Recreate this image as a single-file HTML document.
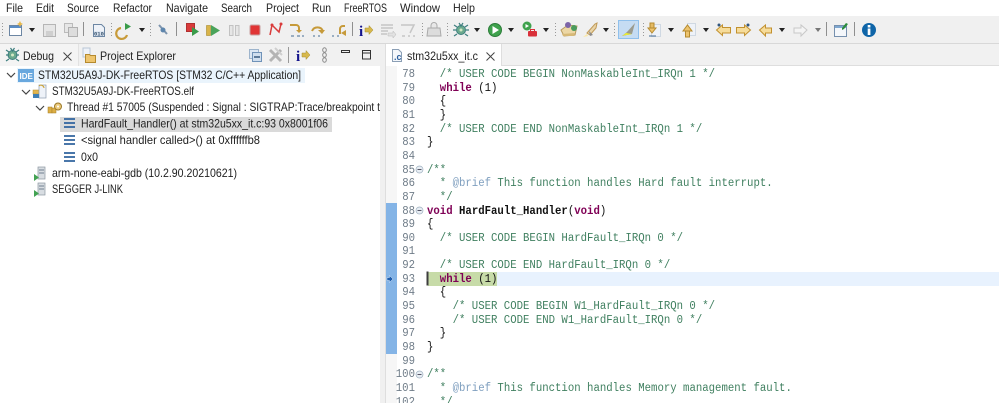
<!DOCTYPE html>
<html><head><meta charset="utf-8"><style>
html,body{margin:0;padding:0;background:#fff}
#p{position:relative;width:999px;height:403px;overflow:hidden;background:#fff;font-family:"Liberation Sans",sans-serif;font-size:12px;color:#222}
.a{position:absolute}
.c{position:absolute;left:427px;margin-top:1px;white-space:pre;font:11.5px/14px "Liberation Mono",monospace;color:#111;transform:scaleX(.9275);transform-origin:0 0}
.n{position:absolute;left:386px;width:29px;margin-top:1px;text-align:right;font:11.5px/14px "Liberation Mono",monospace;color:#6f7c88;transform:scaleX(.9275);transform-origin:100% 0}
.g{color:#3f7f5f}.k{color:#7f0055;font-weight:bold}.b{font-weight:bold}.v{color:#7f9fbf}
.ar{position:absolute;width:0;height:0;border-left:3px solid transparent;border-right:3px solid transparent;border-top:4px solid #222}
svg{position:absolute;overflow:visible}
svg text.u{font-family:"Liberation Sans",sans-serif;font-size:12px;fill:#222}
</style></head><body><div id="p">
<div class="a" style="left:0;top:16px;width:999px;height:27px;background:#f0f0f0"></div>
<div class="a" style="left:0;top:43px;width:999px;height:1px;background:#d8d8d8"></div>
<div class="a" style="left:0;top:44px;width:999px;height:22px;background:#f1f1f1"></div>
<div class="a" style="left:0;top:44px;width:78px;height:22px;background:#f4f4f4"></div>
<div class="a" style="left:78px;top:44px;width:1px;height:22px;background:#e2e2e2"></div>
<div class="a" style="left:380px;top:44px;width:5px;height:359px;background:#f0f0f0"></div>
<div class="a" style="left:385px;top:44px;width:1px;height:359px;background:#dedede"></div>
<div class="a" style="left:386px;top:44px;width:116px;height:22px;background:#fff"></div>
<div class="a" style="left:501px;top:44px;width:1px;height:22px;background:#dedede"></div>
<div class="a" style="left:502px;top:65px;width:497px;height:1px;background:#dedede"></div>

<!-- debug tree highlights -->
<div class="a" style="left:17px;top:68px;width:288px;height:15px;background:#eaf4fc"></div>
<div class="a" style="left:60px;top:117px;width:272px;height:15px;background:#dadada"></div>

<!-- UI text -->
<svg width="999" height="403" style="left:0;top:0">
<g>
<text class="u" x="6" y="12" textLength="17" lengthAdjust="spacingAndGlyphs">File</text>
<text class="u" x="36" y="12" textLength="18" lengthAdjust="spacingAndGlyphs">Edit</text>
<text class="u" x="67" y="12" textLength="32" lengthAdjust="spacingAndGlyphs">Source</text>
<text class="u" x="113" y="12" textLength="39" lengthAdjust="spacingAndGlyphs">Refactor</text>
<text class="u" x="166" y="12" textLength="42" lengthAdjust="spacingAndGlyphs">Navigate</text>
<text class="u" x="221" y="12" textLength="31" lengthAdjust="spacingAndGlyphs">Search</text>
<text class="u" x="266" y="12" textLength="33" lengthAdjust="spacingAndGlyphs">Project</text>
<text class="u" x="312" y="12" textLength="19" lengthAdjust="spacingAndGlyphs">Run</text>
<text class="u" x="344" y="12" textLength="43" lengthAdjust="spacingAndGlyphs">FreeRTOS</text>
<text class="u" x="400" y="12" textLength="40" lengthAdjust="spacingAndGlyphs">Window</text>
<text class="u" x="453" y="12" textLength="22" lengthAdjust="spacingAndGlyphs">Help</text>
<text class="u" x="23" y="60" textLength="31" lengthAdjust="spacingAndGlyphs">Debug</text>
<text class="u" x="100" y="60" textLength="76" lengthAdjust="spacingAndGlyphs">Project Explorer</text>
<text class="u" x="407" y="60" textLength="71" lengthAdjust="spacingAndGlyphs">stm32u5xx_it.c</text>
<text class="u" x="38" y="79" textLength="263" lengthAdjust="spacingAndGlyphs">STM32U5A9J-DK-FreeRTOS [STM32 C/C++ Application]</text>
<text class="u" x="52" y="95" textLength="142" lengthAdjust="spacingAndGlyphs">STM32U5A9J-DK-FreeRTOS.elf</text>
<text class="u" x="67" y="111" textLength="313" lengthAdjust="spacingAndGlyphs">Thread #1 57005 (Suspended : Signal : SIGTRAP:Trace/breakpoint t</text>
<text class="u" x="81" y="127.500" textLength="247" lengthAdjust="spacingAndGlyphs">HardFault_Handler() at stm32u5xx_it.c:93 0x8001f06</text>
<text class="u" x="81" y="144" textLength="179" lengthAdjust="spacingAndGlyphs">&lt;signal handler called&gt;() at 0xffffffb8</text>
<text class="u" x="81" y="161" textLength="17" lengthAdjust="spacingAndGlyphs">0x0</text>
<text class="u" x="52" y="177" textLength="185" lengthAdjust="spacingAndGlyphs">arm-none-eabi-gdb (10.2.90.20210621)</text>
<text class="u" x="52" y="193" textLength="71" lengthAdjust="spacingAndGlyphs">SEGGER J-LINK</text>
</g>
</svg>

<!-- toolbar icons -->
<svg width="999" height="44" style="left:0;top:0">
<g fill="none">
<path d="M2.500 23v13M111.500 23v13M150.500 23v13M422.500 23v13M447.500 23v13M555.500 23v13M614.500 23v13M643.500 23v13" stroke="#999" stroke-dasharray="1 2"/>
<path d="M83.500 22v14M176.500 22v14M352.500 22v14M826.500 22v14M854.500 22v14" stroke="#8f8f8f"/>
<!-- new -->
<rect x="9.500" y="25.500" width="12" height="10" fill="#fff" stroke="#6c86a3"/><rect x="10" y="26" width="11" height="2" fill="#5a8cc4"/>
<path d="M20 21l1 2 2 1-2 1-1 2-1-2-2-1 2-1z" fill="#e8b84a"/>
<!-- save -->
<rect x="43.500" y="24.500" width="12" height="12" fill="#e6e6e6" stroke="#b5b5b5"/><rect x="46" y="31" width="7" height="5" fill="#cfcfcf"/>
<rect x="64.500" y="23.500" width="8" height="9" fill="#e6e6e6" stroke="#bbb"/><rect x="68.500" y="27.500" width="9" height="9" fill="#ddd" stroke="#b0b0b0"/>
<!-- 010 -->
<path d="M93.500 24.500h8l3 3v9h-11z" fill="#eef2f8" stroke="#6c86a3"/><rect x="94" y="31" width="10" height="5" fill="#dfe7f2"/>
<text x="94" y="35.500" font-family="Liberation Mono" font-size="5.500" font-weight="bold" fill="#36536e">010</text>
<!-- debug config -->
<path d="M121 28a5.500 5.500 0 1 0 6 7" stroke="#c89b3a" stroke-width="2.200"/><path d="M125 23l6 3.500-6 3.500z" fill="#3a9b4a"/>
<!-- skip -->
<path d="M159 25l8 9" stroke="#7d94ad" stroke-width="2"/><circle cx="163" cy="30" r="2.500" fill="#5e86ad"/>
<!-- resume etc -->
<rect x="186.500" y="23.500" width="8" height="8" fill="#d93b3b" stroke="#b03030"/><path d="M192 27l7 4.500-7 4.500z" fill="#3a9b4a"/>
<rect x="206.500" y="25.500" width="4" height="10" fill="#d9b44a" stroke="#a98a2c" stroke-width=".6"/><path d="M211 25l9 5.500-9 5.500z" fill="#4aa35a"/>
<rect x="229.500" y="25.500" width="3.500" height="10" fill="#e6e6e6" stroke="#c2c2c2"/><rect x="235.500" y="25.500" width="3.500" height="10" fill="#e6e6e6" stroke="#c2c2c2"/>
<rect x="250" y="25" width="10" height="10" rx="1.500" fill="#e03434" stroke="#c9a0a0"/>
<path d="M270 35l2-10 7 7 2-8" stroke="#d93b3b" stroke-width="1.500"/><circle cx="272" cy="25" r="1.500" fill="#d93b3b"/><circle cx="281" cy="24" r="1.500" fill="#d93b3b"/>
<path d="M290 25h6a3 3 0 0 1 3 3v3" stroke="#c69a3a" stroke-width="2"/><path d="M296 30h6l-3 3z" fill="#c69a3a"/><path d="M291 36h3M297 36h3M302 36h2" stroke="#456b94"/>
<path d="M312 31a6 6 0 0 1 11 0" stroke="#c69a3a" stroke-width="2"/><path d="M318 30h7l-3 4z" fill="#c69a3a"/><path d="M313 36h2M318 36h2" stroke="#456b94"/>
<path d="M332 36h2M337 36h2" stroke="#456b94"/><path d="M340 34v-5a3 3 0 0 1 3-3h2" stroke="#c69a3a" stroke-width="2"/><path d="M341 33l5-3v6z" fill="#c69a3a"/>
<!-- i arrow -->
<text x="359" y="36" font-family="Liberation Serif" font-size="15" font-weight="bold" fill="#14148c">i</text><path d="M365 28h4v-2.500l4 4.500-4 4.500v-2.500h-4z" fill="#d7b84b" stroke="#a68c2e" stroke-width=".5"/>
<!-- disabled -->
<path d="M381 25h12M381 28h12M381 31h7M381 34h6" stroke="#bdbdbd" stroke-width="1.300"/><path d="M388 33h5v-2l3 3.500-3 3.500v-2h-5z" fill="#e2e2e2" stroke="#b8b8b8" stroke-width=".5"/>
<path d="M401 25h13l-4 8M402 36h3M408 36h2M413 36h2" stroke="#c6c6c6" stroke-width="1.500"/>
<rect x="431" y="22.500" width="6" height="9" rx="3" fill="#e8e8e8" stroke="#aaa"/><path d="M428 28h12l1 8h-14z" fill="#dcdcdc" stroke="#aaa"/>
<!-- bug -->
<circle cx="461" cy="30" r="4.500" fill="#6aa98d" stroke="#3e7f7f"/><circle cx="461" cy="30" r="1.500" fill="#d4e8c4"/><path d="M454 25l3 2M468 25l-3 2M453 30h3M469 30h-3M454 36l3-2M468 36l-3-2M459 23l2 3 2-3" stroke="#3e7f7f" stroke-width="1.200"/>
<!-- run -->
<circle cx="495" cy="30" r="6.500" fill="#3fa24d" stroke="#2d7d3a"/><path d="M492.500 26l6.500 4-6.500 4z" fill="#fff"/>
<circle cx="527" cy="26" r="4.500" fill="#3fa24d"/><path d="M525.500 24l3.500 2-3.500 2z" fill="#fff"/><rect x="528" y="31" width="9" height="5.500" rx="1" fill="#d9303a"/><rect x="530.500" y="29.500" width="4" height="2" stroke="#d9303a"/>
<!-- folder -->
<path d="M561 30l7-5 9 1-2 9-11 1z" fill="#ecd7a5" stroke="#b89a5d"/><path d="M562 34l13-1-1 3h-11z" fill="#d7b977"/><circle cx="568" cy="25" r="3" fill="#7d65a8"/><circle cx="574" cy="28" r="3" fill="#4a9b5d"/>
<!-- rocket -->
<path d="M587 33l8-9 2-1-1 5-6 7z" fill="#e9d4a8" stroke="#c09a58"/><path d="M589 31l4 4-3 1z" fill="#8c8c8c"/><path d="M583 37l4-3 1 2z" fill="#fbe8a4"/>
</g>
<rect x="618.500" y="20.500" width="20" height="18" fill="#c5dcf3" stroke="#8fc0ec"/>
<path d="M622 36l5-4 8-9-3 11z" fill="#9b9b8f"/><path d="M622 36c3-1 7-1 10-2l-6-1z" fill="#ecec2e"/>
<g fill="none">
<!-- annotations -->
<rect x="651.500" y="24.500" width="9" height="12" fill="#eef2f8" stroke="#cfd8e2"/>
<rect x="650" y="23" width="4" height="6" fill="#e4ba64" stroke="#b58a2e"/><path d="M648 28h8l-4 5z" fill="#edc36d" stroke="#b58a2e"/><path d="M649 36h7" stroke="#456b94"/>
<rect x="687.500" y="23.500" width="8" height="12" fill="#eef2f8" stroke="#cfd8e2"/>
<path d="M683 31h9l-4.500-6zM685.500 31h4v6h-4z" fill="#edc36d" stroke="#b58a2e"/>
<!-- nav -->
<path d="M716.500 30l6-5v2.500h8v5.500h-8v2.500z" fill="#f6dc9a" stroke="#c2912f"/><circle cx="719" cy="25" r="1.500" fill="#33577f"/>
<path d="M750.500 30l-6-5v2.500h-8v5.500h8v2.500z" fill="#f6dc9a" stroke="#c2912f"/><circle cx="748" cy="25" r="1.500" fill="#33577f"/>
<path d="M759.500 30l6-5v3h6v5h-6v3z" fill="#f6dc9a" stroke="#c2912f"/>
<path d="M807 30l-6-5v3h-7v5h7v3z" fill="#f4f4f4" stroke="#c8c8c8"/>
<!-- note -->
<rect x="834.500" y="25.500" width="12" height="11" fill="#f4f7fb" stroke="#7690ae"/><rect x="835" y="26" width="11" height="2" fill="#7fa7d0"/><path d="M842 28l4-5 2 1-4 5-2 1z" fill="#2d8d3c"/>
<!-- info -->
<circle cx="869" cy="30" r="7" fill="#0f65a8"/><rect x="867.700" y="25" width="2.700" height="2.500" fill="#fff"/><rect x="867.700" y="28.500" width="2.700" height="6.500" fill="#fff"/>
</g>
</svg>
<div class="ar" style="left:29px;top:28px"></div>
<div class="ar" style="left:139px;top:28px"></div>
<div class="ar" style="left:474px;top:28px"></div>
<div class="ar" style="left:508px;top:28px"></div>
<div class="ar" style="left:543px;top:28px"></div>
<div class="ar" style="left:603px;top:28px"></div>
<div class="ar" style="left:668px;top:28px"></div>
<div class="ar" style="left:703px;top:28px"></div>
<div class="ar" style="left:779px;top:28px"></div>
<div class="ar" style="left:815px;top:28px;border-top-color:#777"></div>

<!-- tab row -->
<svg width="999" height="66" style="left:0;top:0"><g fill="none">
<circle cx="12.500" cy="55" r="4.500" fill="#6aa98d" stroke="#3e7f7f"/><circle cx="12.500" cy="55" r="1.500" fill="#d4e8c4"/><path d="M6 50l3 2M19 50l-3 2M6 55h3M19 55h-3M6 61l3-2M19 61l-3-2M10.500 48l2 3 2-3" stroke="#3e7f7f" stroke-width="1.200"/>
<path d="M63.500 52.500l8 8M71.500 52.500l-8 8" stroke="#444" stroke-width="1"/>
<rect x="83" y="48" width="7" height="9" fill="#eef2f8" stroke="#b9c6d6"/><path d="M85.500 54.500h4l1 1h5v7h-10z" fill="#eec56e" stroke="#b58a2e"/>
<rect x="249.500" y="49.500" width="9" height="9" fill="#dce7f3" stroke="#9db4cc"/><rect x="252.500" y="52.500" width="9" height="9" fill="#cfdeee" stroke="#6f92b8"/><path d="M254 57h6" stroke="#35587f" stroke-width="1.500"/>
<path d="M270 50l11 11M281 50l-11 11" stroke="#b4b4b4" stroke-width="3"/><path d="M275 48l7 7" stroke="#cfcfcf" stroke-width="2"/>
<path d="M288.500 47v16" stroke="#999"/>
<text x="296" y="61" font-family="Liberation Serif" font-size="15" font-weight="bold" fill="#14148c">i</text><path d="M302 53h4v-2.500l4 4.500-4 4.500v-2.500h-4z" fill="#d7b84b" stroke="#a68c2e" stroke-width=".5"/>
<ellipse cx="324.500" cy="50" rx="1.800" ry="2.300" stroke="#8a8a8a"/><ellipse cx="324.500" cy="55" rx="1.800" ry="2.300" stroke="#8a8a8a"/><ellipse cx="324.500" cy="60" rx="1.800" ry="2.300" stroke="#8a8a8a"/>
<rect x="341.500" y="50.500" width="8" height="2" stroke="#333"/>
<rect x="362.500" y="50.500" width="8" height="8.500" stroke="#333"/><path d="M363 53h7" stroke="#333"/>
<path d="M392.500 49.500h6l3 3v9h-9z" fill="#f4f7fb" stroke="#8b9fb5"/>
<text x="394" y="60" font-family="Liberation Sans" font-size="9" font-weight="bold" fill="#2b5f9e">.c</text>
<path d="M486.500 52.500l8 8M494.500 52.500l-8 8" stroke="#444"/>
</g></svg>

<!-- tree icons -->
<svg width="390" height="403" style="left:0;top:0"><g fill="none">
<path d="M7 73l4 4 4-4M22 90l4 4 4-4M36 106l4 4 4-4" stroke="#444" stroke-width="1.200"/>
<rect x="18" y="69" width="16" height="13" fill="#69a8de"/>
<text x="19.500" y="79" font-family="Liberation Sans" font-size="8" font-weight="bold" fill="#fff">IDE</text>
<rect x="33" y="90" width="6" height="4" fill="#e2b64e" stroke="#b58a2e" stroke-width=".5"/><rect x="39" y="85" width="7" height="13" fill="#eef2f8" stroke="#8e9db0" stroke-width=".7"/><rect x="33" y="94" width="6" height="4" fill="#3f7fb5"/>
<path d="M39 86c2-2 5 0 5 2" stroke="#caa02e"/>
<rect x="48" y="107" width="4" height="6" fill="#dcae45" stroke="#a57e27" stroke-width=".5"/><rect x="52" y="108" width="4" height="5" fill="#dcae45" stroke="#a57e27" stroke-width=".5"/><circle cx="58" cy="106.500" r="3.500" fill="#eccb7d" stroke="#9c7a2a"/><circle cx="58" cy="106.500" r="1" fill="#fff"/>
<path d="M64 119h11M64 123h11M64 127h11M64 136h11M64 140h11M64 144h11M64 153h11M64 157h11M64 161h11" stroke="#30649e" stroke-width="1.800"/>
<rect x="38" y="167" width="7" height="12" fill="#d8dde2" stroke="#8c96a0" stroke-width=".7"/><path d="M39 170h5M39 173h5" stroke="#708090"/><path d="M34 174l5 3.500-5 3.500z" fill="#42a252"/>
<rect x="38" y="183" width="7" height="12" fill="#d8dde2" stroke="#8c96a0" stroke-width=".7"/><path d="M39 186h5M39 189h5" stroke="#708090"/><path d="M34 190l5 3.500-5 3.500z" fill="#42a252"/>
</g></svg>

<!-- editor ruler -->
<div class="a" style="left:386px;top:66px;width:11px;height:337px;background:#f6f6f6"></div>
<div class="a" style="left:386px;top:203px;width:11px;height:151px;background:#84b4e6"></div>
<div class="a" style="left:428px;top:272px;width:571px;height:13.500px;background:#e8f2fe"></div>
<div class="a" style="left:428px;top:272px;width:69px;height:13.500px;background:#c7dba8"></div>
<svg width="999" height="403" style="left:0;top:0"><g fill="none">
<path d="M427.500 271.500v14" stroke="#3e3e3e" stroke-width="2"/>
<path d="M387 277.500h2.500v-2l3.500 3.500-3.500 3.500v-2h-2.500z" fill="#1f5fae" stroke="#dce9f8" stroke-width=".5"/>
<circle cx="419.500" cy="169.500" r="3.500" fill="#e8eef4" stroke="#9fb0c0" stroke-width=".7"/><path d="M417.500 169.500h4" stroke="#556"/>
<circle cx="419.500" cy="210.500" r="3.500" fill="#e8eef4" stroke="#9fb0c0" stroke-width=".7"/><path d="M417.500 210.500h4" stroke="#556"/>
<circle cx="419.500" cy="374.500" r="3.500" fill="#e8eef4" stroke="#9fb0c0" stroke-width=".7"/><path d="M417.500 374.500h4" stroke="#556"/>
</g></svg>

<div class="n" style="top:67px">78</div><div class="c" style="top:67px"><span class="g">  /* USER CODE BEGIN NonMaskableInt_IRQn 1 */</span></div>
<div class="n" style="top:81px">79</div><div class="c" style="top:81px">  <span class="k">while</span> (1)</div>
<div class="n" style="top:94px">80</div><div class="c" style="top:94px">  {</div>
<div class="n" style="top:108px">81</div><div class="c" style="top:108px">  }</div>
<div class="n" style="top:122px">82</div><div class="c" style="top:122px"><span class="g">  /* USER CODE END NonMaskableInt_IRQn 1 */</span></div>
<div class="n" style="top:135px">83</div><div class="c" style="top:135px">}</div>
<div class="n" style="top:149px">84</div>
<div class="n" style="top:163px">85</div><div class="c" style="top:163px"><span class="g">/**</span></div>
<div class="n" style="top:176px">86</div><div class="c" style="top:176px"><span class="g">  * </span><span class="v">@brief</span><span class="g"> This function handles Hard fault interrupt.</span></div>
<div class="n" style="top:190px">87</div><div class="c" style="top:190px"><span class="g">  */</span></div>
<div class="n" style="top:204px">88</div><div class="c" style="top:204px"><span class="k">void</span> <span class="b">HardFault_Handler</span>(<span class="k">void</span>)</div>
<div class="n" style="top:217px">89</div><div class="c" style="top:217px">{</div>
<div class="n" style="top:231px">90</div><div class="c" style="top:231px"><span class="g">  /* USER CODE BEGIN HardFault_IRQn 0 */</span></div>
<div class="n" style="top:244px">91</div>
<div class="n" style="top:258px">92</div><div class="c" style="top:258px"><span class="g">  /* USER CODE END HardFault_IRQn 0 */</span></div>
<div class="n" style="top:272px">93</div><div class="c" style="top:272px">  <span class="k">while</span> (1)</div>
<div class="n" style="top:285px">94</div><div class="c" style="top:285px">  {</div>
<div class="n" style="top:299px">95</div><div class="c" style="top:299px"><span class="g">    /* USER CODE BEGIN W1_HardFault_IRQn 0 */</span></div>
<div class="n" style="top:313px">96</div><div class="c" style="top:313px"><span class="g">    /* USER CODE END W1_HardFault_IRQn 0 */</span></div>
<div class="n" style="top:326px">97</div><div class="c" style="top:326px">  }</div>
<div class="n" style="top:340px">98</div><div class="c" style="top:340px">}</div>
<div class="n" style="top:354px">99</div>
<div class="n" style="top:367px">100</div><div class="c" style="top:367px"><span class="g">/**</span></div>
<div class="n" style="top:381px">101</div><div class="c" style="top:381px"><span class="g">  * </span><span class="v">@brief</span><span class="g"> This function handles Memory management fault.</span></div>
<div class="n" style="top:395px">102</div><div class="c" style="top:395px"><span class="g">  */</span></div>
</div></body></html>
